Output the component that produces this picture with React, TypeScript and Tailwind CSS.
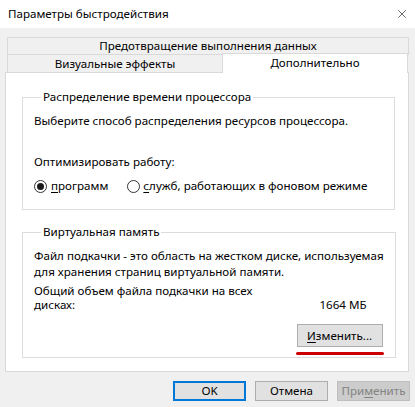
import { X } from "lucide-react";

const font = { fontFamily: '"Segoe UI", "Noto Sans", sans-serif' };

const Radio = ({ checked }: { checked?: boolean }) => (
  <span className="w-[13px] h-[13px] rounded-full border border-[#333] bg-white flex items-center justify-center shrink-0">
    {checked && <span className="w-[7px] h-[7px] rounded-full bg-[#1a1a1a]" />}
  </span>
);

export default function App() {
  return (
    <div
      className="w-[415px] h-[407px] bg-[#f0f0f0] flex flex-col text-[11.6px] leading-[16px] text-black overflow-hidden whitespace-nowrap"
      style={font}
    >
      {/* title bar */}
      <div className="h-[28px] bg-white flex items-center justify-between pl-[8px] pr-[6px] shrink-0">
        <span>Параметры быстродействия</span>
        <X size={14} strokeWidth={1} className="text-black" />
      </div>

      {/* tabs */}
      <div className="ml-[7px] w-[402px] mt-[9px] flex flex-col shrink-0">
        <div className="h-[18px] border border-[#d9d9d9] bg-[#f0f0f0] flex items-center justify-center">
          Предотвращение выполнения данных
        </div>
        <div className="flex items-end h-[18px] -mt-[1px] overflow-visible">
          <div className="w-[216px] h-[18px] border border-b-0 border-[#d9d9d9] bg-[#f0f0f0] flex items-center justify-center">
            Визуальные эффекты
          </div>
          <div className="w-[186px] h-[20px] -ml-[1px] -mb-[1px] shrink-0 border border-b-0 border-[#d9d9d9] bg-white flex items-center justify-center pb-[1px] relative z-10">
            Дополнительно
          </div>
        </div>
      </div>

      {/* panel */}
      <div className="ml-[5px] w-[404px] h-[300px] border border-[#d9d9d9] bg-white px-[16px] pt-[16px] flex flex-col gap-[14px] shrink-0">
        <fieldset className="border border-[#dcdcdc] w-[373px] px-[11px] pb-[15px]">
          <legend className="ml-[7px] px-[2px]">Распределение времени процессора</legend>
          <div className="mt-[8px]">Выберите способ распределения ресурсов процессора.</div>
          <div className="mt-[25px]">Оптимизировать работу:</div>
          <div className="mt-[8px] flex items-center">
            <Radio checked />
            <span className="ml-[4px]">
              <span className="underline underline-offset-2">п</span>рограмм
            </span>
            <span className="ml-[19px]">
              <Radio />
            </span>
            <span className="ml-[3px]">
              <span className="underline underline-offset-2">с</span>лужб, работающих в фоновом режиме
            </span>
          </div>
        </fieldset>

        <fieldset className="border border-[#dcdcdc] w-[373px] px-[11px] pb-[2px]">
          <legend className="ml-[7px] px-[2px]">Виртуальная память</legend>
          <div className="mt-[8px]">
            Файл подкачки - это область на жестком диске, используемая
            <br />
            для хранения страниц виртуальной памяти.
          </div>
          <div className="mt-[4px] flex items-end justify-between pr-[17px] leading-[14px]">
            <div>
              Общий объем файла подкачки на всех
              <br />
              дисках:
            </div>
            <div>1664 МБ</div>
          </div>
          <div className="flex flex-col items-end mt-[12px] pr-[1px]">
            <button className="w-[86px] h-[23px] bg-[#e1e1e1] border border-[#adadad] flex items-center justify-center">
              <span>
                <span className="underline underline-offset-2">И</span>зменить...
              </span>
            </button>
            <div className="w-[88px] h-[3px] mt-[5px] -mr-[1px] rounded-full bg-[#cc0000]" />
          </div>
        </fieldset>
      </div>

      {/* footer buttons */}
      <div className="flex justify-end gap-[9px] pr-[5px] mt-[9px]">
        <button className="w-[73px] h-[20px] bg-[#e1e1e1] border-2 border-[#0078d7] flex items-center justify-center">
          OK
        </button>
        <button className="w-[73px] h-[20px] bg-[#e1e1e1] border border-[#adadad] flex items-center justify-center">
          Отмена
        </button>
        <button className="w-[73px] h-[20px] bg-[#cccccc] border border-[#bfbfbf] text-[#838383] flex items-center justify-center">
          <span>
            При<span className="underline underline-offset-2">м</span>енить
          </span>
        </button>
      </div>
    </div>
  );
}
